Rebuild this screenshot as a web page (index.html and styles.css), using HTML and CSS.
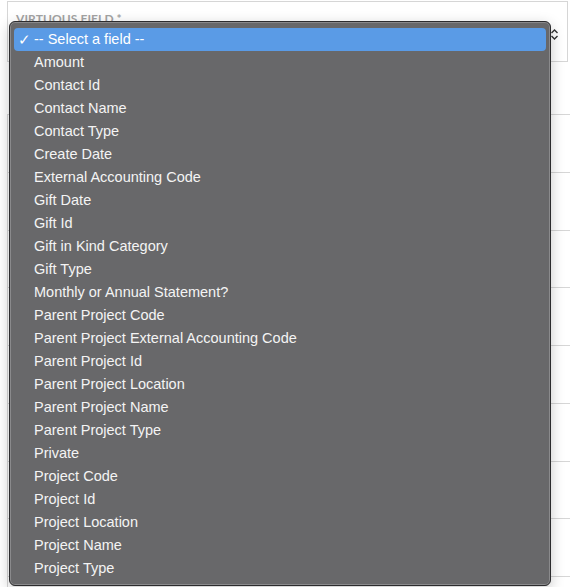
FILE: index.html
```html
<!DOCTYPE html>
<html lang="en">
<head>
    <meta charset="UTF-8">
    <title>Virtuous Field</title>
    <link rel="stylesheet" href="styles.css">
</head>
<body>
    <div class="page">
        <!-- Field box behind the open menu -->
        <div class="field">
            <label class="field-label">Virtuous Field *</label>
            <svg class="select-arrows" width="7" height="11" viewBox="0 0 7 11">
                <path d="M0.5 4 L3.5 1 L6.5 4 M0.5 7 L3.5 10 L6.5 7" fill="none" stroke="#333" stroke-width="1.4"/>
            </svg>
        </div>

        <!-- Rows of the page under the menu -->
        <div class="rows">
            <div class="row"></div>
            <div class="row"></div>
            <div class="row"></div>
            <div class="row"></div>
            <div class="row"></div>
            <div class="row"></div>
            <div class="row"></div>
            <div class="row"></div>
            <div class="row"></div>
        </div>

        <!-- Open select menu -->
        <ul class="menu">
            <li class="option selected"><span class="check">✓</span>-- Select a field --</li>
            <li class="option">Amount</li>
            <li class="option">Contact Id</li>
            <li class="option">Contact Name</li>
            <li class="option">Contact Type</li>
            <li class="option">Create Date</li>
            <li class="option">External Accounting Code</li>
            <li class="option">Gift Date</li>
            <li class="option">Gift Id</li>
            <li class="option">Gift in Kind Category</li>
            <li class="option">Gift Type</li>
            <li class="option">Monthly or Annual Statement?</li>
            <li class="option">Parent Project Code</li>
            <li class="option">Parent Project External Accounting Code</li>
            <li class="option">Parent Project Id</li>
            <li class="option">Parent Project Location</li>
            <li class="option">Parent Project Name</li>
            <li class="option">Parent Project Type</li>
            <li class="option">Private</li>
            <li class="option">Project Code</li>
            <li class="option">Project Id</li>
            <li class="option">Project Location</li>
            <li class="option">Project Name</li>
            <li class="option">Project Type</li>
        </ul>
    </div>
</body>
</html>
```

FILE: styles.css
```css
body {
    margin: 0;
    background-color: #ffffff;
    font-family: "Liberation Sans", Arial, sans-serif;
    overflow: hidden;
}
.page {
    position: relative;
    width: 570px;
    height: 587px;
    padding-top: 1px;
    box-sizing: border-box;
    overflow: hidden;
}
.field {
    position: relative;
    margin-left: 7px;
    width: 561px;
    height: 61px;
    border: 1px solid #d6d6d6;
    box-sizing: border-box;
    padding: 9px 8px 0;
}
.field-label {
    display: block;
    font-family: Lato, "Liberation Sans", sans-serif;
    font-size: 12px;
    font-weight: bold;
    color: #a3a3a3;
    text-transform: uppercase;
    letter-spacing: 0.1px;
}
.select-arrows {
    position: absolute;
    left: 543px;
    top: 27px;
}
.rows {
    margin-top: 52px;
    margin-left: 7px;
    border-left: 1px solid #d6d6d6;
}
.row {
    height: 57.75px;
    border-top: 1px solid #d6d6d6;
    box-sizing: border-box;
}
/* Open select menu */
.menu {
    position: absolute;
    left: 9px;
    top: 21px;
    width: 542px;
    margin: 0;
    padding: 6px 4px 5px;
    list-style: none;
    background-color: #68686a;
    border: 1px solid #2c2c2e;
    border-radius: 6px;
    box-sizing: border-box;
    box-shadow: 0 4px 14px rgba(0, 0, 0, 0.22), inset 0 0 0 1px #8a8a8c;
}
.option {
    height: 23px;
    line-height: 23px;
    padding-left: 20px;
    position: relative;
    font-size: 14.5px;
    color: #f4f4f4;
    white-space: nowrap;
}
.option.selected {
    background-color: #5a9be6;
    border-radius: 4px;
    color: #ffffff;
}
.check {
    position: absolute;
    left: 4px;
    top: 0;
    font-size: 15px;
}
```
